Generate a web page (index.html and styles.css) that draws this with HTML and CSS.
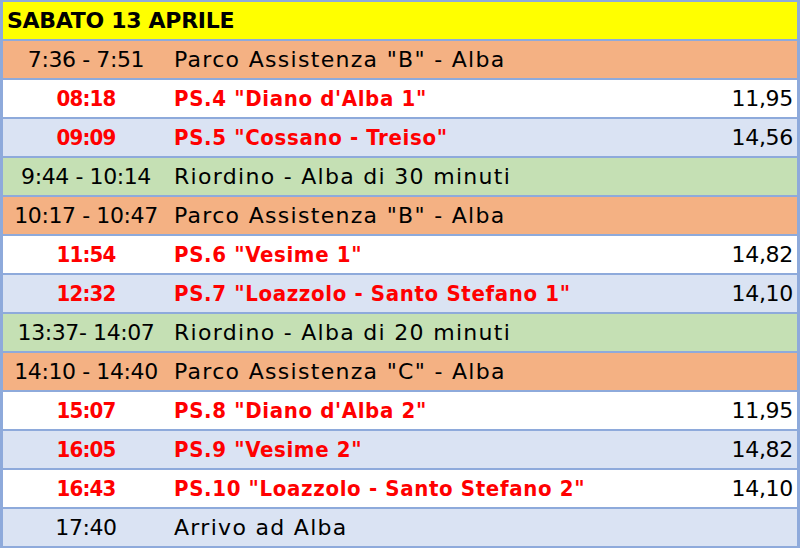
FILE: index.html
```html
<!DOCTYPE html>
<html lang="it">
<head>
<meta charset="utf-8">
<title>Sabato 13 Aprile</title>
<link rel="stylesheet" href="styles.css">
</head>
<body>
<div class="sheet">
  <div class="row head">SABATO 13 APRILE</div>
  <div class="row orange"><span class="time">7:36 - 7:51</span><span class="desc">Parco Assistenza "B" - Alba</span><span class="km"></span></div>
  <div class="row white ps"><span class="time">08:18</span><span class="desc">PS.4 "Diano d'Alba 1"</span><span class="km">11,95</span></div>
  <div class="row blue ps"><span class="time">09:09</span><span class="desc">PS.5 "Cossano - Treiso"</span><span class="km">14,56</span></div>
  <div class="row green"><span class="time">9:44 - 10:14</span><span class="desc">Riordino - Alba di 30 minuti</span><span class="km"></span></div>
  <div class="row orange"><span class="time">10:17 - 10:47</span><span class="desc">Parco Assistenza "B" - Alba</span><span class="km"></span></div>
  <div class="row white ps"><span class="time">11:54</span><span class="desc">PS.6 "Vesime 1"</span><span class="km">14,82</span></div>
  <div class="row blue ps"><span class="time">12:32</span><span class="desc">PS.7 "Loazzolo - Santo Stefano 1"</span><span class="km">14,10</span></div>
  <div class="row green"><span class="time">13:37- 14:07</span><span class="desc">Riordino - Alba di 20 minuti</span><span class="km"></span></div>
  <div class="row orange"><span class="time">14:10 - 14:40</span><span class="desc">Parco Assistenza "C" - Alba</span><span class="km"></span></div>
  <div class="row white ps"><span class="time">15:07</span><span class="desc">PS.8 "Diano d'Alba 2"</span><span class="km">11,95</span></div>
  <div class="row blue ps"><span class="time">16:05</span><span class="desc">PS.9 "Vesime 2"</span><span class="km">14,82</span></div>
  <div class="row white ps"><span class="time">16:43</span><span class="desc">PS.10 "Loazzolo - Santo Stefano 2"</span><span class="km">14,10</span></div>
  <div class="row blue"><span class="time">17:40</span><span class="desc">Arrivo ad Alba</span><span class="km"></span></div>
</div>
</body>
</html>
```

FILE: styles.css
```css
html, body {
  margin: 0;
  padding: 0;
  background: #ffffff;
}
.sheet {
  width: 800px;
  height: 548px;
  box-sizing: border-box;
  background: #8eaadb;
  padding: 2px 3px 2px 3px;
  display: flex;
  flex-direction: column;
  gap: 2px;
  font-family: "DejaVu Sans", sans-serif;
  font-size: 22px;
  color: #000;
}
.row {
  height: 37px;
  box-sizing: border-box;
  padding-top: 1px;
  display: grid;
  grid-template-columns: 166px 1fr auto;
  align-items: center;
  line-height: 36px;
  white-space: nowrap;
}
.head {
  display: block;
  background: #ffff00;
  font-weight: bold;
  letter-spacing: -0.3px;
  padding-left: 4px;
}
.orange { background: #f4b183; }
.white { background: #ffffff; }
.blue { background: #dae3f3; }
.green { background: #c5e0b4; }
.time {
  text-align: center;
  letter-spacing: -0.4px;
}
.desc {
  padding-left: 5px;
  letter-spacing: 1.3px;
}
.km {
  padding-right: 4px;
  text-align: right;
  letter-spacing: -0.3px;
}
.ps .time, .ps .desc {
  color: #ff0000;
  font-weight: bold;
  font-family: "DejaVu Sans Condensed", "DejaVu Sans", sans-serif;
  font-stretch: condensed;
}
.ps .desc {
  letter-spacing: 0.65px;
}
.ps .time {
  letter-spacing: -0.8px;
}
```
